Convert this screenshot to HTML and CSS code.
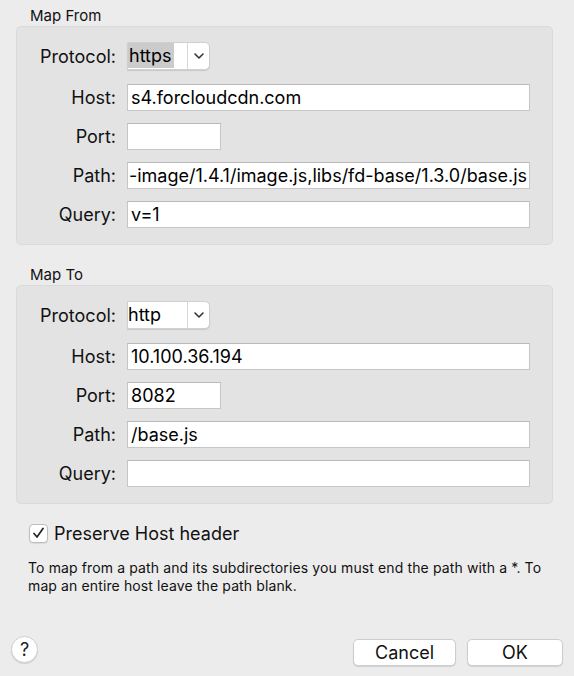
FILE: index.html
```html
<!DOCTYPE html>
<html>
<head>
<meta charset="utf-8">
<link rel="stylesheet" href="styles.css">
</head>
<body>
<div class="dialog">
  <div class="section-title first">Map From</div>
  <div class="box">
    <div class="row row-first">
      <span class="label">Protocol:</span>
      <div class="select"><span class="select-value"><span class="hl">https</span></span><span class="select-arrow"><svg width="12" height="8" viewBox="0 0 12 8"><path d="M2 2 L6 6 L10 2" fill="none" stroke="#333" stroke-width="1.6" stroke-linecap="round" stroke-linejoin="round"/></svg></span></div>
    </div>
    <div class="row">
      <span class="label">Host:</span>
      <div class="input wide">s4.forcloudcdn.com</div>
    </div>
    <div class="row">
      <span class="label">Port:</span>
      <div class="input short"></div>
    </div>
    <div class="row">
      <span class="label">Path:</span>
      <div class="input wide clip"><span>-image/1.4.1/image.js,libs/fd-base/1.3.0/base.js</span></div>
    </div>
    <div class="row">
      <span class="label">Query:</span>
      <div class="input wide">v=1</div>
    </div>
  </div>

  <div class="section-title">Map To</div>
  <div class="box">
    <div class="row row-first">
      <span class="label">Protocol:</span>
      <div class="select"><span class="select-value">http</span><span class="select-arrow"><svg width="12" height="8" viewBox="0 0 12 8"><path d="M2 2 L6 6 L10 2" fill="none" stroke="#333" stroke-width="1.6" stroke-linecap="round" stroke-linejoin="round"/></svg></span></div>
    </div>
    <div class="row">
      <span class="label">Host:</span>
      <div class="input wide">10.100.36.194</div>
    </div>
    <div class="row">
      <span class="label">Port:</span>
      <div class="input short">8082</div>
    </div>
    <div class="row">
      <span class="label">Path:</span>
      <div class="input wide">/base.js</div>
    </div>
    <div class="row">
      <span class="label">Query:</span>
      <div class="input wide"></div>
    </div>
  </div>

  <div class="check-row">
    <span class="checkbox"><svg width="13" height="12" viewBox="0 0 13 12"><path d="M2 6.5 L5 10 L11 1.5" fill="none" stroke="#222" stroke-width="1.7" stroke-linecap="round" stroke-linejoin="round"/></svg></span>
    <span class="check-label">Preserve Host header</span>
  </div>

  <p class="help-text">To map from a path and its subdirectories you must end the path with a *. To map an entire host leave the path blank.</p>

  <div class="footer">
    <button class="help-btn">?</button>
    <div class="buttons">
      <button class="btn cancel">Cancel</button>
      <button class="btn ok">OK</button>
    </div>
  </div>
</div>
</body>
</html>
```
FILE: styles.css
```css
* { box-sizing: border-box; }
html, body {
  margin: 0;
  padding: 0;
  background: #ececec;
}
body {
  font-family: Inter, "Liberation Sans", sans-serif;
  color: #111;
  width: 574px;
  height: 676px;
  overflow: hidden;
}
.dialog {
  padding: 0 0 0 16px;
}
.section-title {
  height: 20px;
  line-height: 20px;
  font-size: 15px;
  padding-left: 14px;
  margin-top: 20px;
  color: #111;
}
.section-title.first {
  margin-top: 6px;
}
.box {
  width: 537px;
  height: 219px;
  background: #e3e3e3;
  border: 1px solid #dadada;
  border-radius: 5px;
  padding: 15px 22px 0 0;
  display: flex;
  flex-direction: column;
  gap: 12px;
}
.row {
  display: flex;
  align-items: center;
  gap: 11px;
}
.row-first {
  margin-bottom: 2px;
}
.label {
  width: 99px;
  text-align: right;
  font-size: 18px;
  color: #111;
}
.input {
  height: 27px;
  background: #fff;
  border: 1px solid #c6c6c6;
  border-top-color: #b9b9b9;
  font-size: 18px;
  line-height: 25px;
  padding-left: 3px;
  white-space: nowrap;
  overflow: hidden;
  color: #000;
}
.input.wide { width: 403px; }
.input.short { width: 94px; }
.input.clip {
  display: flex;
  justify-content: flex-end;
  padding-right: 2px;
}
.input.clip span { flex: none; }
.select {
  width: 83px;
  height: 28px;
  display: flex;
  background: #fff;
  border: 1px solid #d0d0d0;
  border-radius: 0 5px 5px 0;
  box-shadow: 0 1px 1px rgba(0,0,0,0.12);
  font-size: 18px;
  color: #000;
}
.select-value {
  width: 59px;
  line-height: 26px;
  padding-left: 0;
}
.hl {
  display: inline-block;
  background: #cbcbcb;
  padding: 0 2px 0 1px;
  line-height: 25px;
}
.select-arrow {
  flex: 1;
  border-left: 1px solid #d8d8d8;
  display: flex;
  align-items: center;
  justify-content: center;
}
.check-row {
  display: flex;
  align-items: center;
  margin-top: 18px;
  padding-left: 13px;
  height: 22px;
}
.checkbox {
  width: 19px;
  height: 19px;
  background: #fff;
  border: 1px solid #bdbdbd;
  border-radius: 4px;
  display: flex;
  align-items: center;
  justify-content: center;
  box-shadow: 0 1px 1px rgba(0,0,0,0.08);
}
.check-label {
  margin-left: 6px;
  font-size: 18px;
  color: #111;
}
.help-text {
  margin: 15px 0 0 12px;
  width: 530px;
  font-size: 14px;
  letter-spacing: 0.12px;
  line-height: 18px;
  color: #111;
}
.footer {
  display: flex;
  align-items: flex-end;
  justify-content: space-between;
  margin-top: 41px;
  padding-right: 11px;
}
.help-btn {
  width: 27px;
  height: 27px;
  border-radius: 50%;
  background: #fff;
  border: 1px solid #cfcfcf;
  box-shadow: 0 1px 1px rgba(0,0,0,0.12);
  font-family: Inter, "Liberation Sans", sans-serif;
  font-size: 18px;
  color: #222;
  padding: 0;
  margin-left: -5px;
  line-height: 25px;
}
.buttons {
  display: flex;
  gap: 11px;
  margin-bottom: -3px;
}
.btn {
  height: 27px;
  background: #fff;
  border: 1px solid #cdcdcd;
  border-radius: 5px;
  box-shadow: 0 1px 1px rgba(0,0,0,0.12);
  font-family: Inter, "Liberation Sans", sans-serif;
  font-size: 18px;
  color: #111;
  padding: 0;
}
.btn.cancel { width: 103px; }
.btn.ok { width: 96px; }
```
